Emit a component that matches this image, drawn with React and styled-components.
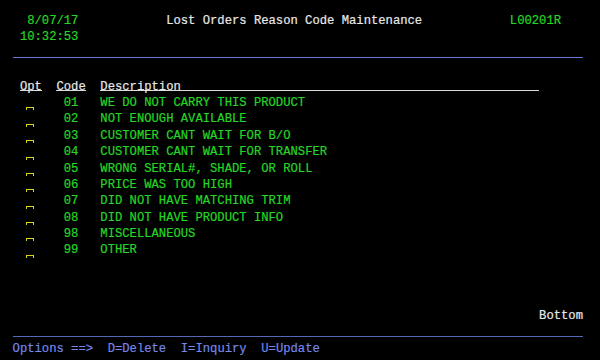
import styled, { createGlobalStyle } from "styled-components";

const GlobalStyle = createGlobalStyle`
  html, body {
    margin: 0;
    padding: 0;
    background: #000;
  }
`;

const Screen = styled.div`
  width: 600px;
  height: 360px;
  box-sizing: border-box;
  padding: 13px 0 0 12.6px;
  background: #000;
  font-family: "Liberation Mono", "DejaVu Sans Mono", monospace;
  font-size: 12.2px;
  -webkit-text-stroke: 0.2px currentColor;
  overflow: hidden;
`;

const Row = styled.div`
  display: grid;
  grid-template-columns: repeat(80, 1ch);
  height: 16.4px;
  line-height: 16.4px;
  white-space: pre;
`;

const colors = {
  green: "#25d625",
  white: "#e8e8e8",
  blue: "#7587e8",
  yellow: "#dcd41c",
};

const Field = styled.span`
  grid-column: ${(p) => p.$col} / span ${(p) => p.$span || 1};
  color: ${(p) => colors[p.$color || "green"]};
`;

const HeadCell = styled.span`
  grid-column: ${(p) => p.$col} / span ${(p) => p.$span};
  height: 11px;
  border-bottom: 1px solid #dcdcdc;
  color: ${colors.white};
`;

const Rule = styled.div`
  grid-column: 1 / span 78;
  align-self: end;
  height: 1px;
  margin-bottom: ${(p) => p.$gap}px;
  background: ${(p) => p.$color};
`;

const InputMark = styled.span`
  grid-column: 3 / span 1;
  align-self: end;
  width: 6px;
  height: 2px;
  margin-left: -1px;
  margin-bottom: 1px;
  border: 1px solid ${colors.yellow};
  border-bottom: none;
`;

const reasons = [
  ["01", "WE DO NOT CARRY THIS PRODUCT"],
  ["02", "NOT ENOUGH AVAILABLE"],
  ["03", "CUSTOMER CANT WAIT FOR B/O"],
  ["04", "CUSTOMER CANT WAIT FOR TRANSFER"],
  ["05", "WRONG SERIAL#, SHADE, OR ROLL"],
  ["06", "PRICE WAS TOO HIGH"],
  ["07", "DID NOT HAVE MATCHING TRIM"],
  ["08", "DID NOT HAVE PRODUCT INFO"],
  ["98", "MISCELLANEOUS"],
  ["99", "OTHER"],
];

export default function App() {
  return (
    <>
      <GlobalStyle />
      <Screen>
        <Row>
          <Field $col={3} $span={7}>8/07/17</Field>
          <Field $col={22} $span={35} $color="white">
            Lost Orders Reason Code Maintenance
          </Field>
          <Field $col={69} $span={7}>L00201R</Field>
        </Row>
        <Row>
          <Field $col={2} $span={8}>10:32:53</Field>
        </Row>
        <Row>
          <Rule $color="#6677dd" $gap={4} />
        </Row>
        <Row />
        <Row>
          <HeadCell $col={2} $span={3}>Opt</HeadCell>
          <HeadCell $col={7} $span={4}>Code</HeadCell>
          <HeadCell $col={13} $span={60}>Description</HeadCell>
        </Row>
        {reasons.map(([code, desc]) => (
          <Row key={code}>
            <InputMark />
            <Field $col={8} $span={2}>{code}</Field>
            <Field $col={13} $span={50}>{desc}</Field>
          </Row>
        ))}
        <Row />
        <Row />
        <Row />
        <Row>
          <Field $col={73} $span={6} $color="white">Bottom</Field>
        </Row>
        <Row>
          <Rule $color="#5468b8" $gap={4} />
        </Row>
        <Row>
          <Field $col={1} $span={45} $color="blue">
            Options ==>  D=Delete  I=Inquiry  U=Update
          </Field>
        </Row>
      </Screen>
    </>
  );
}
